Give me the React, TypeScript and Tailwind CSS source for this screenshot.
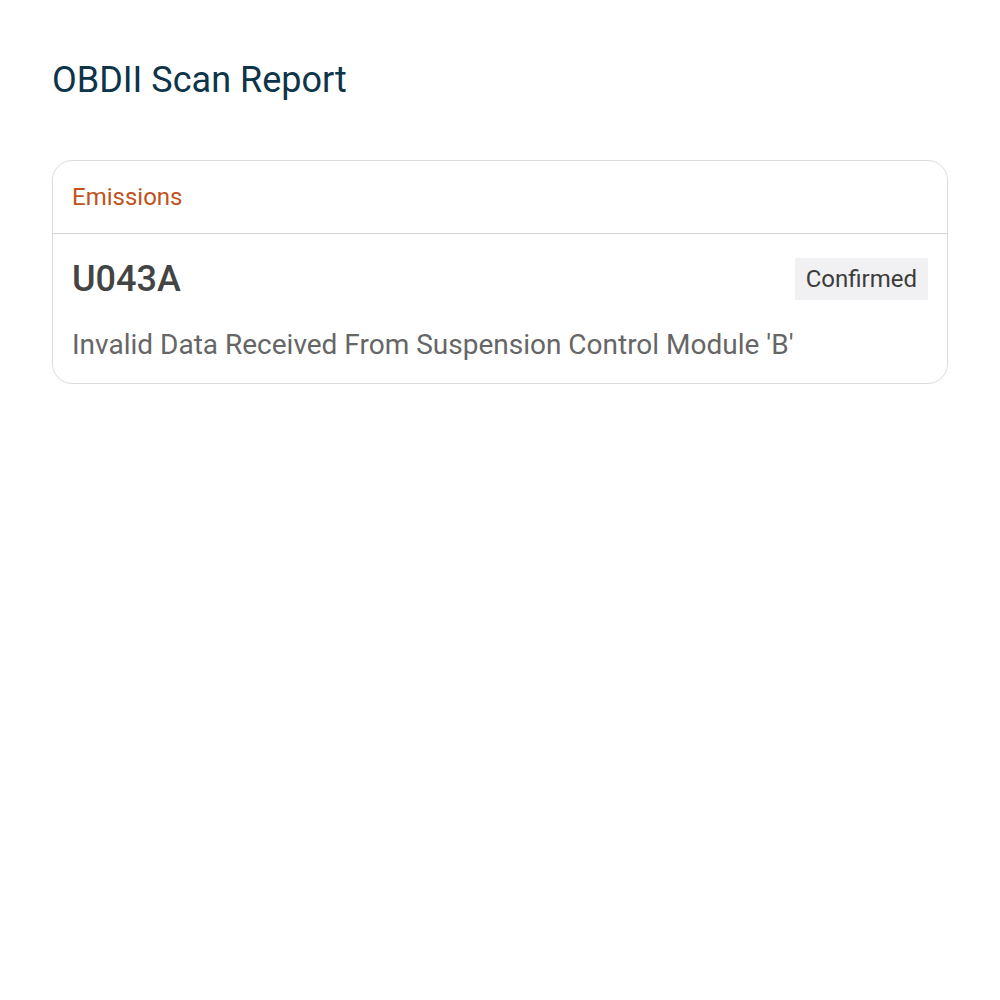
import React from "react";

export default function App() {
  const codes = [
    {
      code: "U043A",
      status: "Confirmed",
      description: "Invalid Data Received From Suspension Control Module 'B'",
    },
  ];
  return (
    <div className="min-h-screen bg-white px-[52px] pt-[58px] font-['Roboto',sans-serif]">
      <h1 className="text-[36px] leading-[44px] text-[#0d3449]">OBDII Scan Report</h1>

      <div className="mt-[58px] rounded-[20px] border border-[#dcdcdc]">
        {/* Category header */}
        <div className="border-b border-[#d4d4d4] pl-[19px] pr-5 py-[23px]">
          <p className="text-[24px] leading-[26px] text-[#c0531b]">Emissions</p>
        </div>

        {/* Codes */}
        {codes.map((item, index) => (
          <div key={index} className="pl-[19px] pr-[19px] pt-6 pb-[22px]">
            <div className="flex items-center justify-between">
              <p className="text-[36px] font-medium leading-[42px] text-[#444444]">{item.code}</p>
              <span className="bg-[#f1f1f4] px-[11px] py-[7px] text-[24px] leading-[28px] text-[#3c3c3c]">
                {item.status}
              </span>
            </div>
            <p className="mt-[29px] text-[28px] leading-[32px] text-[#666666]">{item.description}</p>
          </div>
        ))}
      </div>
    </div>
  );
}
